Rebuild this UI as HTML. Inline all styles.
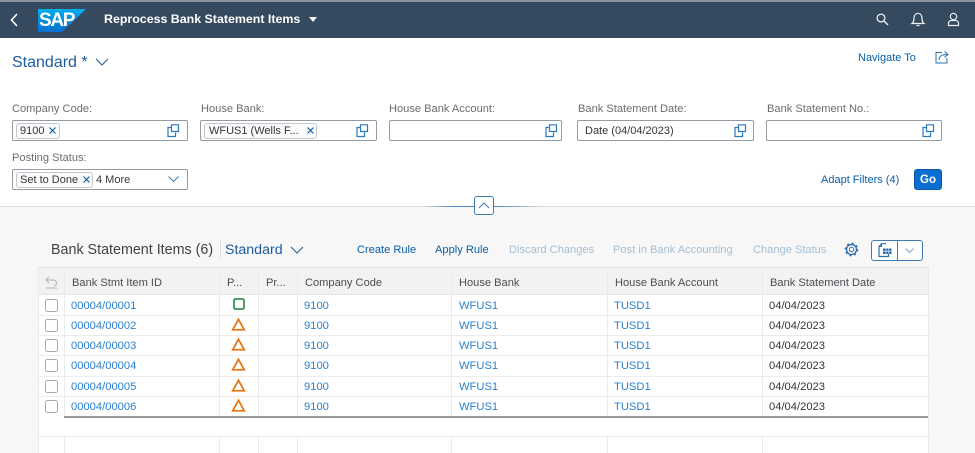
<!DOCTYPE html>
<html><head><meta charset="utf-8"><style>
*{box-sizing:border-box}
html,body{margin:0;padding:0}
body{width:975px;height:453px;overflow:hidden;position:relative;background:#fff;font-family:"Liberation Sans",sans-serif;font-size:11px;color:#32363a}
.a{position:absolute;white-space:nowrap}
.l{color:#6a6d70;font-size:11.100px;line-height:14px}
.f{position:absolute;height:21px;background:#fff;border:1px solid #959ba2;border-radius:2px;top:120px}
.t{position:absolute;top:2px;height:16px;border:1px solid #c4c8cc;border-radius:3px;background:#fbfbfb;font-size:11px;line-height:14px;padding-left:3px;color:#32363a}
.x{position:absolute;width:8px;height:8px}
.blue{color:#0a5fa8}
.dis{color:#a6bed4}
.tb{font-size:11.100px;top:243px;line-height:14px}
.c{color:#2a80d2}
.r{font-size:11.200px;line-height:14px}
.h{top:276px;color:#4a4e52;line-height:14px;font-size:11.100px}
svg{position:absolute;display:block;overflow:visible}
.vl{position:absolute;width:1px;background:#ebebec}
.hl{position:absolute;left:38px;width:891px;height:1px;background:#ececed}
</style></head><body>
<div class="a" style="left:0;top:0;width:975px;height:38px;background:#354a5f;border-top:2px solid #8b949c"></div>
<svg style="left:9px;top:13px" width="10" height="14"><path d="M8 1 L2.500 7 L8 13" fill="none" stroke="#fff" stroke-width="1.600"/></svg>
<svg style="left:38px;top:9px" width="48" height="24"><defs><linearGradient id="g" x1="0" y1="0" x2="0" y2="1"><stop offset="0" stop-color="#00aeef"/><stop offset="1" stop-color="#0a6ed1"/></linearGradient></defs><path d="M0 0H48L24 23H0Z" fill="url(#g)"/></svg>
<div class="a" style="left:39px;top:10px;font-size:19px;line-height:21px;font-weight:bold;color:#fff;letter-spacing:-1.300px">SAP</div>
<div class="a" style="left:104px;top:12px;font-size:12.400px;line-height:15px;font-weight:bold;color:#fff">Reprocess Bank Statement Items</div>
<svg style="left:309px;top:17px" width="9" height="6"><path d="M0 0H8L4 5Z" fill="#fff"/></svg>
<svg style="left:876px;top:13px" width="13" height="13"><circle cx="5" cy="5" r="3.900" fill="none" stroke="#e8eef4" stroke-width="1.300"/><path d="M8 8L12 12" stroke="#e8eef4" stroke-width="1.400"/></svg>
<svg style="left:911px;top:12px" width="14" height="15"><path d="M1 11.500C3 10 3 8 3 6C3 3 5 1.300 7 1.300C9 1.300 11 3 11 6C11 8 11 10 13 11.500Z" fill="none" stroke="#e8eef4" stroke-width="1.200"/><path d="M5.500 13.500H8.500" stroke="#e8eef4" stroke-width="1.200"/></svg>
<svg style="left:947px;top:12px" width="13" height="15"><circle cx="6.500" cy="4.500" r="3.200" fill="none" stroke="#e8eef4" stroke-width="1.200"/><path d="M1.500 13.500V11C1.500 9.500 3 8.500 4.500 8.500H8.500C10 8.500 11.500 9.500 11.500 11V13.500Z" fill="none" stroke="#e8eef4" stroke-width="1.200"/></svg>

<div class="a" style="left:12px;top:53px;font-size:16px;line-height:19px;color:#1c5c9c">Standard *</div>
<svg style="left:95px;top:58px" width="15" height="9"><path d="M1 1L7 7L13 1" fill="none" stroke="#1c5c9c" stroke-width="1"/></svg>
<div class="a blue" style="left:858px;top:51px;line-height:14px">Navigate To</div>
<svg style="left:935px;top:50px" width="15" height="15"><path d="M7 2.500H1V13H12V8" fill="none" stroke="#2b6cae" stroke-width="1"/><path d="M4 10C4 6.500 6 4.500 12 4.500M9.500 1.500L13 4.500L9.500 7.500" fill="none" stroke="#2b6cae" stroke-width="1"/></svg>

<div class="a l" style="left:12px;top:102px">Company Code:</div>
<div class="a l" style="left:201px;top:102px">House Bank:</div>
<div class="a l" style="left:389px;top:102px">House Bank Account:</div>
<div class="a l" style="left:578px;top:102px">Bank Statement Date:</div>
<div class="a l" style="left:767px;top:102px">Bank Statement No.:</div>
<div class="a l" style="left:12px;top:151px">Posting Status:</div>

<svg width="0" height="0"><defs><g id="xx"><path d="M.5 .5L6.500 6.500M6.500 .5L.5 6.500" stroke="#0a5aa8" stroke-width="1.100" fill="none"/></g></defs></svg>
<div class="f" style="left:12px;width:176px"><div class="t" style="left:3px;width:44px">9100</div><svg class="x" style="left:36px;top:6px"><use href="#xx"/></svg></div>
<div class="f" style="left:200px;width:177px"><div class="t" style="left:3px;width:113px;padding-left:4px">WFUS1 (Wells F...</div><svg class="x" style="left:106px;top:6px"><use href="#xx"/></svg></div>
<div class="f" style="left:389px;width:173px"></div>
<div class="f" style="left:577px;width:177px"><div class="a" style="left:7px;top:3px;line-height:14px">Date (04/04/2023)</div></div>
<div class="f" style="left:766px;width:176px"></div>
<div class="f" style="left:12px;width:176px;top:169px"><div class="t" style="left:3px;width:77px">Set to Done</div><svg class="x" style="left:70px;top:6px"><use href="#xx"/></svg><div class="a" style="left:83px;top:3px;line-height:14px">4 More</div></div>
<svg style="left:168px;top:176px" width="11" height="7"><path d="M.5 .5L5.500 5.500L10.500 .5" fill="none" stroke="#3f7cb5" stroke-width="1"/></svg>

<svg width="0" height="0"><defs><g id="vh"><path d="M4.500 3.500H1V12.500H8.500V8.500M4.500 .8H11.500V7.500H4.500Z" fill="none" stroke="#2b78c2" stroke-width="1.200"/></g></defs></svg>
<svg style="left:167px;top:124px" width="12" height="13"><use href="#vh"/></svg>
<svg style="left:356px;top:124px" width="12" height="13"><use href="#vh"/></svg>
<svg style="left:545px;top:124px" width="12" height="13"><use href="#vh"/></svg>
<svg style="left:734px;top:124px" width="12" height="13"><use href="#vh"/></svg>
<svg style="left:922px;top:124px" width="12" height="13"><use href="#vh"/></svg>

<div class="a blue" style="left:821px;top:173px;line-height:14px">Adapt Filters (4)</div>
<div class="a" style="left:914px;top:169px;width:28px;height:21px;background:#0a6ed1;border:1px solid #0a5aa8;border-radius:3px;color:#fff;font-weight:bold;text-align:center;line-height:20px;font-size:11.500px">Go</div>

<div class="a" style="left:0;top:206px;width:975px;height:247px;background:#f7f7f7;border-top:1px solid #dcdddf"></div>
<div class="a" style="left:423px;top:206px;width:120px;height:1px;background:linear-gradient(90deg,#dcdddf,#4a86be 25%,#4a86be 60%,#dcdddf)"></div>
<div class="a" style="left:474px;top:196px;width:20px;height:19px;background:#fff;border:1px solid #3f7cb5;border-radius:3px"></div>
<svg style="left:478px;top:202px" width="12" height="7"><path d="M1 6L6 1L11 6" fill="none" stroke="#3f7cb5" stroke-width="1"/></svg>

<div class="a" style="left:51px;top:242px;font-size:14.300px;line-height:17px;color:#3f4347">Bank Statement Items (6)</div>
<div class="a" style="left:220px;top:240px;width:1px;height:19px;background:#dfe0e1"></div>
<div class="a" style="left:225px;top:242px;font-size:14.200px;line-height:17px;color:#1c5c9c">Standard</div>
<svg style="left:290px;top:246px" width="15" height="9"><path d="M1 1L7 7L13 1" fill="none" stroke="#1c5c9c" stroke-width="1"/></svg>
<div class="a blue tb" style="left:357px">Create Rule</div>
<div class="a blue tb" style="left:435px">Apply Rule</div>
<div class="a dis tb" style="left:509px">Discard Changes</div>
<div class="a dis tb" style="left:613px">Post in Bank Accounting</div>
<div class="a dis tb" style="left:753px">Change Status</div>
<svg style="left:844px;top:242px" width="15" height="15"><circle cx="7.500" cy="7.500" r="2.200" fill="none" stroke="#2b6cae"/><circle cx="7.500" cy="7.500" r="5" fill="none" stroke="#2b6cae" stroke-width="1.300"/><circle cx="7.500" cy="7.500" r="6.200" fill="none" stroke="#2b6cae" stroke-width="1.300" stroke-dasharray="2 2.870"/></svg>
<div class="a" style="left:871px;top:240px;width:52px;height:21px;border:1px solid #3f7cb5;border-radius:3px;background:#fff"></div>
<div class="a" style="left:897px;top:240px;width:1px;height:21px;background:#3f7cb5"></div>
<svg style="left:878px;top:243px" width="14" height="15"><path d="M8 .7H3.500L1 3.500V13.500H10.500V11" fill="none" stroke="#2b6cae" stroke-width="1.200"/><path d="M3.500 .7V3.500H1" fill="none" stroke="#2b6cae"/><rect x="5" y="5.500" width="8.500" height="5.500" fill="#2b6cae"/><path d="M5 8.200H13.500M8 5.500V11M10.800 5.500V11" stroke="#fff" stroke-width=".6"/></svg>
<svg style="left:905px;top:248px" width="9" height="6"><path d="M.5 .5L4.500 4.500L8.500 .5" fill="none" stroke="#7ba3c9" stroke-width="1"/></svg>

<div class="a" style="left:38px;top:267px;width:891px;height:186px;background:#fff"></div>
<div class="a" style="left:38px;top:267px;width:891px;height:28px;background:#f2f2f2;border-top:1px solid #dcdddf;border-bottom:1px solid #e4e4e4"></div>
<div class="vl" style="left:38px;top:267px;height:186px"></div><div class="vl" style="left:928px;top:267px;height:186px"></div>
<div class="vl" style="left:64px;top:267px;height:150px"></div><div class="vl" style="left:219px;top:267px;height:150px"></div><div class="vl" style="left:258px;top:267px;height:150px"></div><div class="vl" style="left:297px;top:267px;height:150px"></div><div class="vl" style="left:451px;top:267px;height:150px"></div><div class="vl" style="left:607px;top:267px;height:150px"></div><div class="vl" style="left:762px;top:267px;height:150px"></div>
<div class="vl" style="left:64px;top:436px;height:17px"></div><div class="vl" style="left:219px;top:436px;height:17px"></div><div class="vl" style="left:258px;top:436px;height:17px"></div><div class="vl" style="left:297px;top:436px;height:17px"></div><div class="vl" style="left:451px;top:436px;height:17px"></div><div class="vl" style="left:607px;top:436px;height:17px"></div><div class="vl" style="left:762px;top:436px;height:17px"></div>
<div class="hl" style="top:315px"></div><div class="hl" style="top:335px"></div><div class="hl" style="top:355px"></div><div class="hl" style="top:376px"></div><div class="hl" style="top:396px"></div><div class="hl" style="top:436px"></div>
<div class="a" style="left:64px;top:416px;width:864px;height:2px;background:#97999c"></div>
<svg style="left:45px;top:276px" width="13" height="13"><path d="M4 1L1 4L4 7M1 4H8C10.500 4 11.500 5.500 11.500 7.500C11.500 9 10.500 9.500 9 9.500M1 12H12" fill="none" stroke="#b0b2b4" stroke-width="1"/></svg>
<div class="a h" style="left:72px">Bank Stmt Item ID</div>
<div class="a h" style="left:227px">P...</div>
<div class="a h" style="left:266px">Pr...</div>
<div class="a h" style="left:305px">Company Code</div>
<div class="a h" style="left:459px">House Bank</div>
<div class="a h" style="left:615px">House Bank Account</div>
<div class="a h" style="left:770px">Bank Statement Date</div>

<svg style="left:233px;top:298px" width="12" height="12"><rect x="1" y="1" width="10" height="10" rx="1.500" fill="none" stroke="#107e3e" stroke-width="1.500"/></svg>
<svg width="0" height="0"><defs><g id="tr"><path d="M6.500 1.300L12.300 11.800H.7Z" fill="none" stroke="#e9730c" stroke-width="1.700"/></g><g id="cb"><rect x=".5" y=".5" width="12" height="12" rx="2" fill="#fff" stroke="#a8abae"/></g></defs></svg>
<svg style="left:232px;top:318px" width="13" height="13"><use href="#tr"/></svg>
<svg style="left:232px;top:338px" width="13" height="13"><use href="#tr"/></svg>
<svg style="left:232px;top:358px" width="13" height="13"><use href="#tr"/></svg>
<svg style="left:232px;top:379px" width="13" height="13"><use href="#tr"/></svg>
<svg style="left:232px;top:399px" width="13" height="13"><use href="#tr"/></svg>
<svg style="left:45px;top:299px" width="13" height="13"><use href="#cb"/></svg>
<svg style="left:45px;top:319px" width="13" height="13"><use href="#cb"/></svg>
<svg style="left:45px;top:339px" width="13" height="13"><use href="#cb"/></svg>
<svg style="left:45px;top:359px" width="13" height="13"><use href="#cb"/></svg>
<svg style="left:45px;top:380px" width="13" height="13"><use href="#cb"/></svg>
<svg style="left:45px;top:400px" width="13" height="13"><use href="#cb"/></svg>

<div class="a c r" style="left:71px;top:299px">00004/00001</div><div class="a c r" style="left:304px;top:299px">9100</div><div class="a c r" style="left:459px;top:299px">WFUS1</div><div class="a c r" style="left:614px;top:299px">TUSD1</div><div class="a r" style="left:769px;top:299px">04/04/2023</div>
<div class="a c r" style="left:71px;top:319px">00004/00002</div><div class="a c r" style="left:304px;top:319px">9100</div><div class="a c r" style="left:459px;top:319px">WFUS1</div><div class="a c r" style="left:614px;top:319px">TUSD1</div><div class="a r" style="left:769px;top:319px">04/04/2023</div>
<div class="a c r" style="left:71px;top:339px">00004/00003</div><div class="a c r" style="left:304px;top:339px">9100</div><div class="a c r" style="left:459px;top:339px">WFUS1</div><div class="a c r" style="left:614px;top:339px">TUSD1</div><div class="a r" style="left:769px;top:339px">04/04/2023</div>
<div class="a c r" style="left:71px;top:359px">00004/00004</div><div class="a c r" style="left:304px;top:359px">9100</div><div class="a c r" style="left:459px;top:359px">WFUS1</div><div class="a c r" style="left:614px;top:359px">TUSD1</div><div class="a r" style="left:769px;top:359px">04/04/2023</div>
<div class="a c r" style="left:71px;top:380px">00004/00005</div><div class="a c r" style="left:304px;top:380px">9100</div><div class="a c r" style="left:459px;top:380px">WFUS1</div><div class="a c r" style="left:614px;top:380px">TUSD1</div><div class="a r" style="left:769px;top:380px">04/04/2023</div>
<div class="a c r" style="left:71px;top:400px">00004/00006</div><div class="a c r" style="left:304px;top:400px">9100</div><div class="a c r" style="left:459px;top:400px">WFUS1</div><div class="a c r" style="left:614px;top:400px">TUSD1</div><div class="a r" style="left:769px;top:400px">04/04/2023</div>
</body></html>
